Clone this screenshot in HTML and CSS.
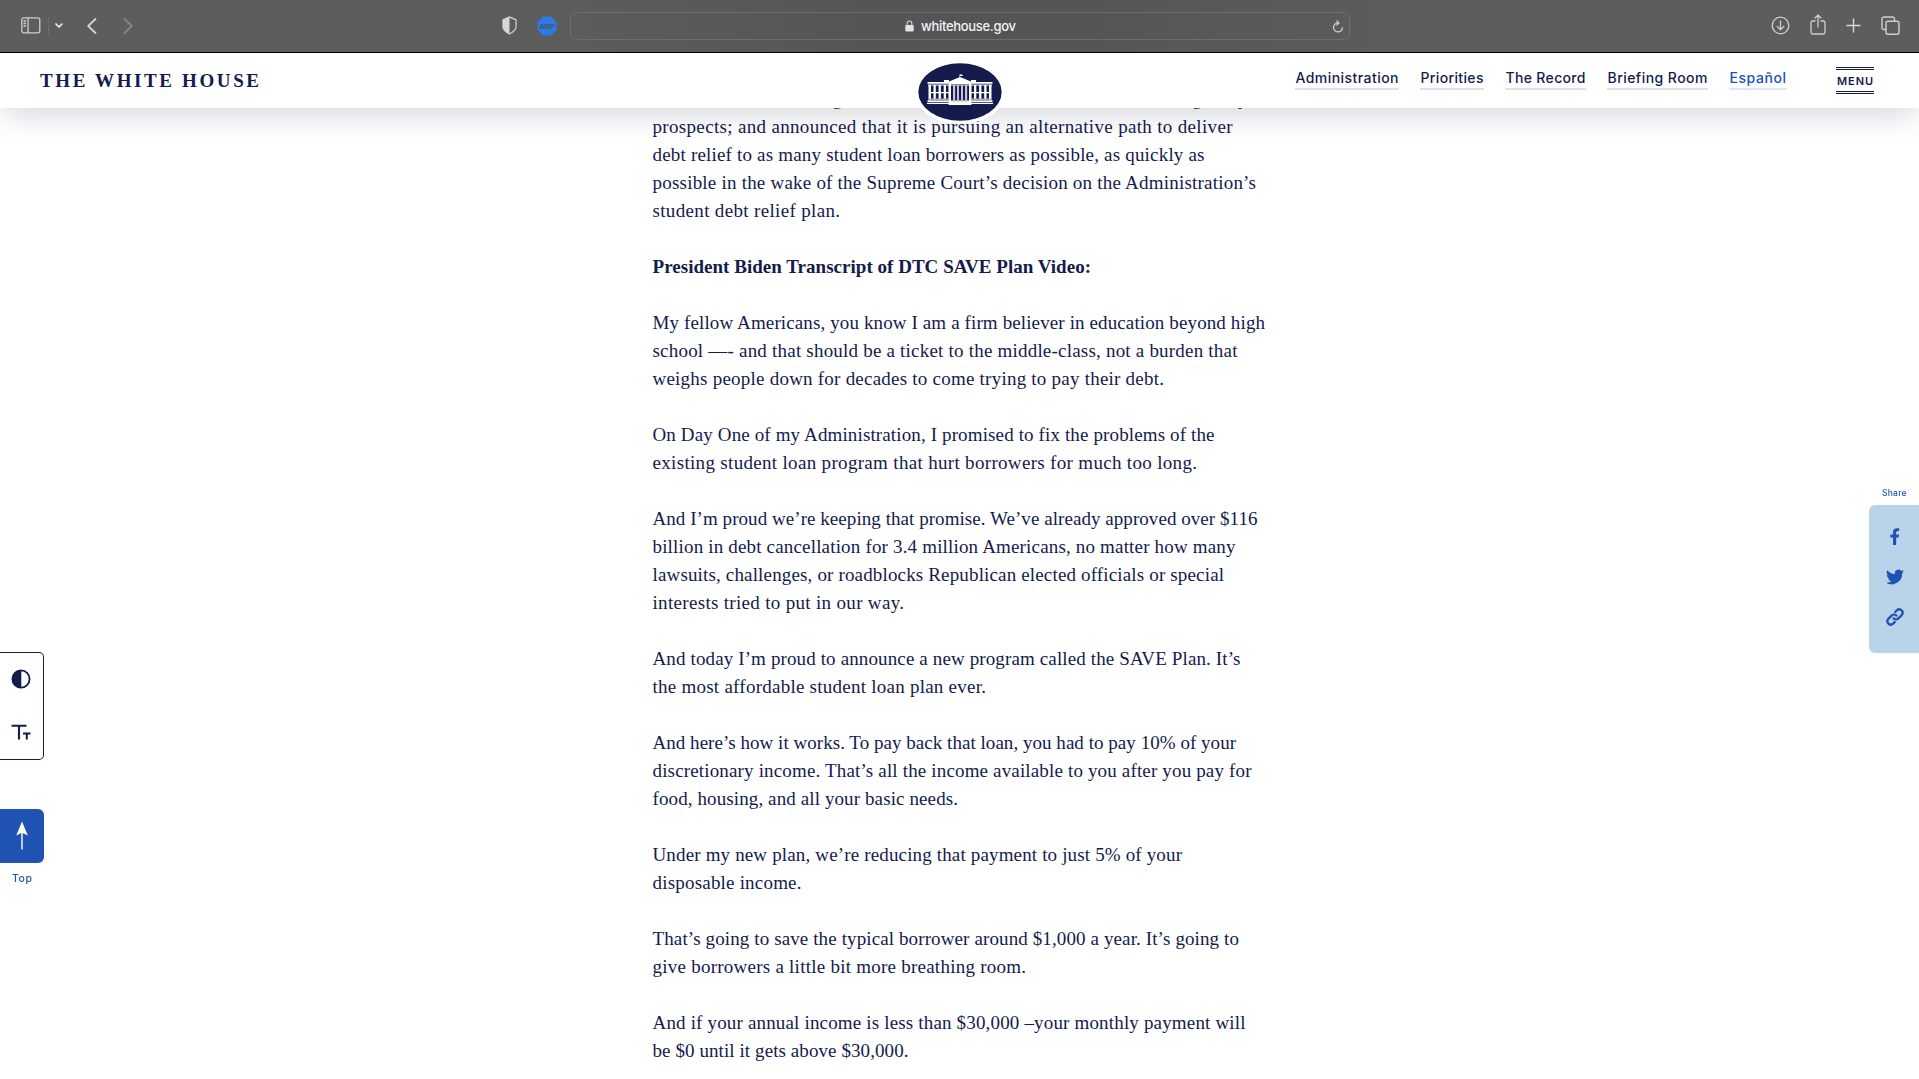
FILE: index.html
```html
<!DOCTYPE html>
<html lang="en">
<head>
<meta charset="utf-8">
<title>The White House</title>
<link rel="stylesheet" href="styles.css">
</head>
<body>
<div class="browser">
  <div class="tools tools-left">
    <svg class="ico-sidebar" width="20" height="17" viewBox="0 0 20 17" fill="none" stroke="#cfcfcf" stroke-width="1.3"><rect x=".8" y=".8" width="18" height="15" rx="2"/><path d="M7 1v15M2.500 4h2.500M2.500 6.500h2.500M2.500 9h2.500"/></svg>
    <span class="divider"></span>
    <svg class="ico-down" width="8" height="6" viewBox="0 0 8 6" fill="none" stroke="#eee" stroke-width="1.7" stroke-linecap="round" stroke-linejoin="round"><path d="M1 1l3 3 3-3"/></svg>
    <svg class="ico-back" width="10" height="16" viewBox="0 0 10 16" fill="none" stroke="#d4d4d4" stroke-width="1.8" stroke-linecap="round" stroke-linejoin="round"><path d="M8.500 1L1.200 8l7.300 7"/></svg>
    <svg class="ico-fwd" width="10" height="16" viewBox="0 0 10 16" fill="none" stroke="#868686" stroke-width="1.800" stroke-linecap="round" stroke-linejoin="round"><path d="M1.500 1l7.300 7-7.300 7"/></svg>
  </div>
  <div class="tools tools-mid">
    <svg width="15" height="19" viewBox="0 0 15 19"><path d="M7.500 1L14 3.800v7.200c0 3-3 5-6.500 7C4 16 1 14 1 11V3.800z" fill="none" stroke="#c6c6c6" stroke-width="1.400"/><path d="M7.500 1v17C4 16 1 14 1 11V3.800z" fill="#d6d6d6"/></svg>
    <svg class="ico-abp" width="20" height="20" viewBox="0 0 20 20"><path d="M6 .5h8L19.500 6v8L14 19.500H6L.5 14V6z" fill="#2b7be4"/><text x="10" y="12.800" text-anchor="middle" textLength="15.500" class="abp">ABP</text></svg>
  </div>
  <div class="address">
    <div class="domain">
      <svg width="9" height="12" viewBox="0 0 9 12"><rect x=".3" y="5" width="8.400" height="6.500" rx="1.200" fill="#e2e2e2"/><path d="M2.200 5.500V3.300a2.300 2.300 0 0 1 4.600 0v2.200" fill="none" stroke="#d0d0d0" stroke-width="1.200"/></svg>
      <span class="fit" data-width="95">whitehouse.gov</span>
    </div>
    <svg class="ico-reload" width="12" height="13" viewBox="0 0 12 13" fill="none" stroke="#cfcfcf" stroke-width="1.200" stroke-linecap="round" stroke-linejoin="round"><path d="M6.500 3A4.500 4.500 0 1 0 10.500 7.500M4.800.8L7 3 4.800 5.200"/></svg>
  </div>
  <div class="tools tools-right">
    <svg width="19" height="19" viewBox="0 0 19 19" fill="none" stroke="#cfcfcf" stroke-width="1.300" stroke-linecap="round" stroke-linejoin="round"><circle cx="9.500" cy="9.500" r="8.300"/><path d="M9.500 5v8.500M6.300 10.500l3.200 3.200 3.200-3.200"/></svg>
    <svg class="ico-share" width="16" height="21" viewBox="0 0 16 21" fill="none" stroke="#cfcfcf" stroke-width="1.300" stroke-linecap="round" stroke-linejoin="round"><path d="M5 7H2.500Q1 7 1 8.500v10Q1 20 2.500 20h11q1.500 0 1.500-1.500v-10Q15 7 13.500 7H11M8 13V1.200M5 4l3-3 3 3"/></svg>
    <svg width="15" height="15" viewBox="0 0 15 15" fill="none" stroke="#dadada" stroke-width="1.400" stroke-linecap="round"><path d="M7.500 1v13M1 7.500h13"/></svg>
    <svg width="19" height="19" viewBox="0 0 19 19" fill="none" stroke="#cfcfcf" stroke-width="1.400"><rect x="5" y="5.200" width="13" height="13" rx="2"/><path d="M5 13.500H3q-2 0-2-2V3q0-2 2-2h8.500q2 0 2 2v2"/></svg>
  </div>
</div>

<header class="site-header">
  <div class="brand fit" data-width="219">THE WHITE HOUSE</div>
  <svg class="seal" width="92" height="66" viewBox="0 0 92 66">
    <ellipse cx="46" cy="33" rx="45.500" ry="32" fill="#fff"/>
    <ellipse cx="46" cy="33" rx="41.700" ry="28.700" fill="#141b4d"/>
    <g fill="#fff">
      <path d="M13.500 23h65v1.800h-65zM14 25.600h64v1H14zM14.500 25.500H17v17h-2.500zM75 25.500h2.500v17H75zM13.500 41.500h65v1.500h-65zM13 43.700h66V45H13zM35 22.500l11-4.500 11 4.500v2.500H35zM34.500 43h23v3h-23zM45.500 15.500h3v1.600h-2.400V19h-.6zM30 21h5v2.500h-5zM57 21h5v2.500h-5z"/>
      <path d="M19.500 26h2.300v15.500h-2.300zM24.600 26h2.300v15.500h-2.300zM29.700 26H32v15.500h-2.300zM34.500 25H37v18h-2.500zM55 25h2.500v18H55zM60 26h2.300v15.500H60zM65.100 26h2.300v15.500h-2.300zM70.200 26h2.300v15.500h-2.300zM15 33h20v1.300H15zM57 33h20v1.300H57z"/>
    </g>
    <path d="M15 39.500h20v2H15zM57 39.500h20v2H57z" fill="#a9acc3"/>
    <path d="M39 26h2.200v17H39zM43 26h2v17h-2zM47 26h2v17h-2zM51 26h2.200v17H51z" fill="#c3c5d5"/>
  </svg>
  <nav class="nav">
    <a class="fit" data-width="103">Administration</a>
    <a class="fit" data-width="63">Priorities</a>
    <a class="fit" data-width="80">The Record</a>
    <a class="fit" data-width="100">Briefing Room</a>
    <a class="fit spanish" data-width="56.500">Español</a>
    <button class="menu"><span class="fit" data-width="36">MENU</span></button>
  </nav>
</header>

<main class="article">
  <p>
    <span class="fit" data-width="595">and insufficient earnings that leave them with career outcomes and greatly</span>
    <span class="fit" data-width="580">prospects; and announced that it is pursuing an alternative path to deliver</span>
    <span class="fit" data-width="552">debt relief to as many student loan borrowers as possible, as quickly as</span>
    <span class="fit" data-width="603.500">possible in the wake of the Supreme Court’s decision on the Administration’s</span>
    <span class="fit" data-width="187.500">student debt relief plan.</span>
  </p>
  <p><strong class="fit" data-width="438.500">President Biden Transcript of DTC SAVE Plan Video:</strong></p>
  <p>
    <span class="fit" data-width="612.500">My fellow Americans, you know I am a firm believer in education beyond high</span>
    <span class="fit" data-width="585">school —- and that should be a ticket to the middle-class, not a burden that</span>
    <span class="fit" data-width="511.500">weighs people down for decades to come trying to pay their debt.</span>
  </p>
  <p>
    <span class="fit" data-width="562">On Day One of my Administration, I promised to fix the problems of the</span>
    <span class="fit" data-width="544.500">existing student loan program that hurt borrowers for much too long.</span>
  </p>
  <p>
    <span class="fit" data-width="605">And I’m proud we’re keeping that promise. We’ve already approved over $116</span>
    <span class="fit" data-width="583">billion in debt cancellation for 3.4 million Americans, no matter how many</span>
    <span class="fit" data-width="571.500">lawsuits, challenges, or roadblocks Republican elected officials or special</span>
    <span class="fit" data-width="251.500">interests tried to put in our way.</span>
  </p>
  <p>
    <span class="fit" data-width="588">And today I’m proud to announce a new program called the SAVE Plan. It’s</span>
    <span class="fit" data-width="333.500">the most affordable student loan plan ever.</span>
  </p>
  <p>
    <span class="fit" data-width="583.500">And here’s how it works. To pay back that loan, you had to pay 10% of your</span>
    <span class="fit" data-width="599">discretionary income. That’s all the income available to you after you pay for</span>
    <span class="fit" data-width="305.500">food, housing, and all your basic needs.</span>
  </p>
  <p>
    <span class="fit" data-width="529.500">Under my new plan, we’re reducing that payment to just 5% of your</span>
    <span class="fit" data-width="149">disposable income.</span>
  </p>
  <p>
    <span class="fit" data-width="586.500">That’s going to save the typical borrower around $1,000 a year. It’s going to</span>
    <span class="fit" data-width="373.500">give borrowers a little bit more breathing room.</span>
  </p>
  <p>
    <span class="fit" data-width="593">And if your annual income is less than $30,000 –your monthly payment will</span>
    <span class="fit" data-width="256">be $0 until it gets above $30,000.</span>
  </p>
</main>

<aside class="left-rail">
  <div class="access">
    <button><svg width="20" height="20" viewBox="0 0 20 20"><circle cx="10" cy="10" r="8.600" fill="none" stroke="#141b4d" stroke-width="1.800"/><path d="M10.300 1v18H10a9 9 0 0 1 0-18z" fill="#141b4d"/></svg></button>
    <button><svg width="20" height="16" viewBox="0 0 20 16" fill="none" stroke="#141b4d"><path d="M.5 1.800h15M8 2v13.500" stroke-width="2.100"/><path d="M12 9.500h7.500M15.800 9.500v6" stroke-width="2"/></svg></button>
  </div>
  <button class="top"><svg width="12" height="29" viewBox="0 0 12 29" fill="#fff"><path d="M6 .5l5.800 14L6.700 12v16.500H5.300V12L.2 14.500z"/></svg></button>
  <span class="top-label"><span class="fit" data-width="20">Top</span></span>
</aside>

<aside class="share">
  <span class="share-label"><span class="fit" data-width="24.500">Share</span></span>
  <div class="share-box">
    <svg width="10" height="17" viewBox="0 0 10 17"><path d="M3 17V9.500H.3v-3H3V4.300C3 1.700 4.500.3 6.900.3c1.100 0 2.300.2 2.300.2V3H7.900C6.600 3 6.200 3.800 6.200 4.600v1.900h2.900l-.5 3H6.200V17z" fill="#2052b4"/></svg>
    <svg width="18" height="16" viewBox="0 0 24 20"><path d="M24 2.400a10 10 0 0 1-2.800.8A5 5 0 0 0 23.300.5a10 10 0 0 1-3.100 1.200 4.900 4.900 0 0 0-8.400 4.500A14 14 0 0 1 1.700 1a4.900 4.900 0 0 0 1.500 6.600A5 5 0 0 1 1 7v.1a4.900 4.900 0 0 0 4 4.800 5 5 0 0 1-2.300.1 4.900 4.900 0 0 0 4.600 3.400A9.900 9.900 0 0 1 0 17.500a14 14 0 0 0 21.500-12.400A10 10 0 0 0 24 2.400z" fill="#2052b4"/></svg>
    <svg width="18" height="18" viewBox="0 0 18 18" fill="none" stroke="#2052b4" stroke-width="2.300" stroke-linecap="round"><path d="M7.600 10.400a3.400 3.400 0 0 0 4.800 0l3.300-3.300a3.400 3.400 0 0 0-4.800-4.800L9.300 3.900M10.400 7.600a3.400 3.400 0 0 0-4.800 0L2.300 10.900a3.400 3.400 0 0 0 4.800 4.800l1.600-1.600"/></svg>
  </div>
</aside>
<script src="fit.js"></script>
</body>
</html>
```
FILE: styles.css
```css
* { box-sizing: border-box; }
body {
  margin: 0;
  height: 1079px;
  overflow: hidden;
  background: #fff;
  color: #141b4d;
  font-family: "Liberation Serif", serif;
}
svg { display: block; flex: none; }
button { margin: 0; padding: 0; border: 0; background: none; color: inherit; font: inherit; }
.fit { white-space: nowrap; }

.browser {
  display: grid;
  grid-template-columns: 570px 780px 1fr;
  grid-template-rows: 52px;
  height: 53px;
  border-bottom: 1px solid #000;
  background: linear-gradient(90deg, #5d5d5d 0, #5c5c5c 30%, #555557 46%, #555557 56%, #5c5c5c 72%, #5d5d5d 100%);
  position: relative;
  z-index: 3;
}
.tools { display: flex; align-items: center; padding-bottom: 1px; }
.tools-left { grid-area: 1 / 1; padding-left: 21px; }
.divider { width: 1px; height: 18px; margin-left: 7px; background: #6d6d6d; }
.ico-down { margin-left: 6px; }
.ico-back { margin-left: 24px; }
.ico-fwd { margin-left: 26px; }
.tools-mid { grid-area: 1 / 1; justify-self: end; width: 68px; }
.ico-abp { margin-left: 20px; }
.abp { font: 700 8px "Liberation Sans", sans-serif; fill: #4d5564; }
.address {
  grid-area: 1 / 2;
  align-self: center;
  display: grid;
  grid-template-columns: 1fr 12px;
  align-items: center;
  height: 28px;
  padding: 0 5px 0 12px;
  border: 1px solid #6d6d6e;
  border-radius: 7px;
}
.domain {
  display: flex;
  align-items: center;
  gap: 7px;
  padding-left: 322px;
  color: #f2f2f2;
  font: 500 13px Inter, sans-serif;
}
.tools-right { grid-area: 1 / 3; padding-left: 421px; gap: 20px; }
.ico-share { margin: -3px 0 0 0; }

.site-header {
  position: relative;
  z-index: 2;
  display: grid;
  grid-template-columns: 1fr 92px 1fr;
  height: 55px;
  background: #fff;
  box-shadow: 0 10px 30px -4px rgba(20, 27, 77, .19);
}
.brand {
  justify-self: start;
  padding: 17px 0 0 40px;
  font-size: 19px;
  font-weight: 700;
  line-height: 22px;
}
.seal { margin-top: 6px; }
.nav {
  justify-self: end;
  display: flex;
  gap: 22px;
  align-items: flex-start;
  padding: 17px 45px 0 0;
  font: 500 14px Inter, sans-serif;
}
.nav a { height: 20px; line-height: 16px; border-bottom: 2px solid #e0e0e8; }
.nav .spanish { color: #2052b4; border-color: #dfe7f7; }
.menu {
  display: flex;
  justify-content: center;
  align-items: center;
  width: 38px;
  height: 27px;
  margin: -3px 0 0 28px;
  border: 3px double #141b4d;
  border-width: 3px 0;
  font-size: 11px;
  font-weight: 600;
}

.article { margin: -23px 0 0 652.500px; font-size: 19px; line-height: 28px; }
.article p { margin: 0 0 28px; }
.article .fit { display: block; width: max-content; }

.left-rail {
  position: fixed;
  left: 0;
  top: 652px;
  width: 44px;
  display: flex;
  flex-direction: column;
  font: 500 10.500px Inter, sans-serif;
  color: #2052b4;
}
.access {
  display: grid;
  grid-template-rows: 1fr 1fr;
  height: 108px;
  border: 1px solid #141b4d;
  border-left: 0;
  border-radius: 0 5px 5px 0;
}
.access button, .top { display: flex; align-items: center; justify-content: center; padding: 0 1px 1px 0; }
.top { height: 54px; margin-top: 49px; border-radius: 0 6px 6px 0; background: #2052b4; }
.top-label { margin-top: 9px; padding-left: 12px; }

.share {
  position: fixed;
  right: 0;
  top: 487px;
  width: 50px;
  color: #2052b4;
  font: 500 8.500px/12px Inter, sans-serif;
}
.share-label { display: block; padding-left: 13px; }
.share-box {
  display: flex;
  flex-direction: column;
  align-items: center;
  gap: 23.500px;
  height: 148px;
  margin-top: 6px;
  padding: 23px 0 0 1px;
  border-radius: 6px 0 0 6px;
  background: #b9d4e9;
}
```
FILE: fit.js
```js
// Tracks each label out to its set measure, in px.
document.querySelectorAll(".fit").forEach(function (el) {
  var range = document.createRange();
  range.selectNodeContents(el);
  var natural = range.getBoundingClientRect().width;
  var count = el.textContent.length;
  var spacing = (Number(el.dataset.width) - natural) / (count - 1);
  el.style.letterSpacing = spacing + "px";
  el.style.marginRight = -spacing + "px";
});
```
